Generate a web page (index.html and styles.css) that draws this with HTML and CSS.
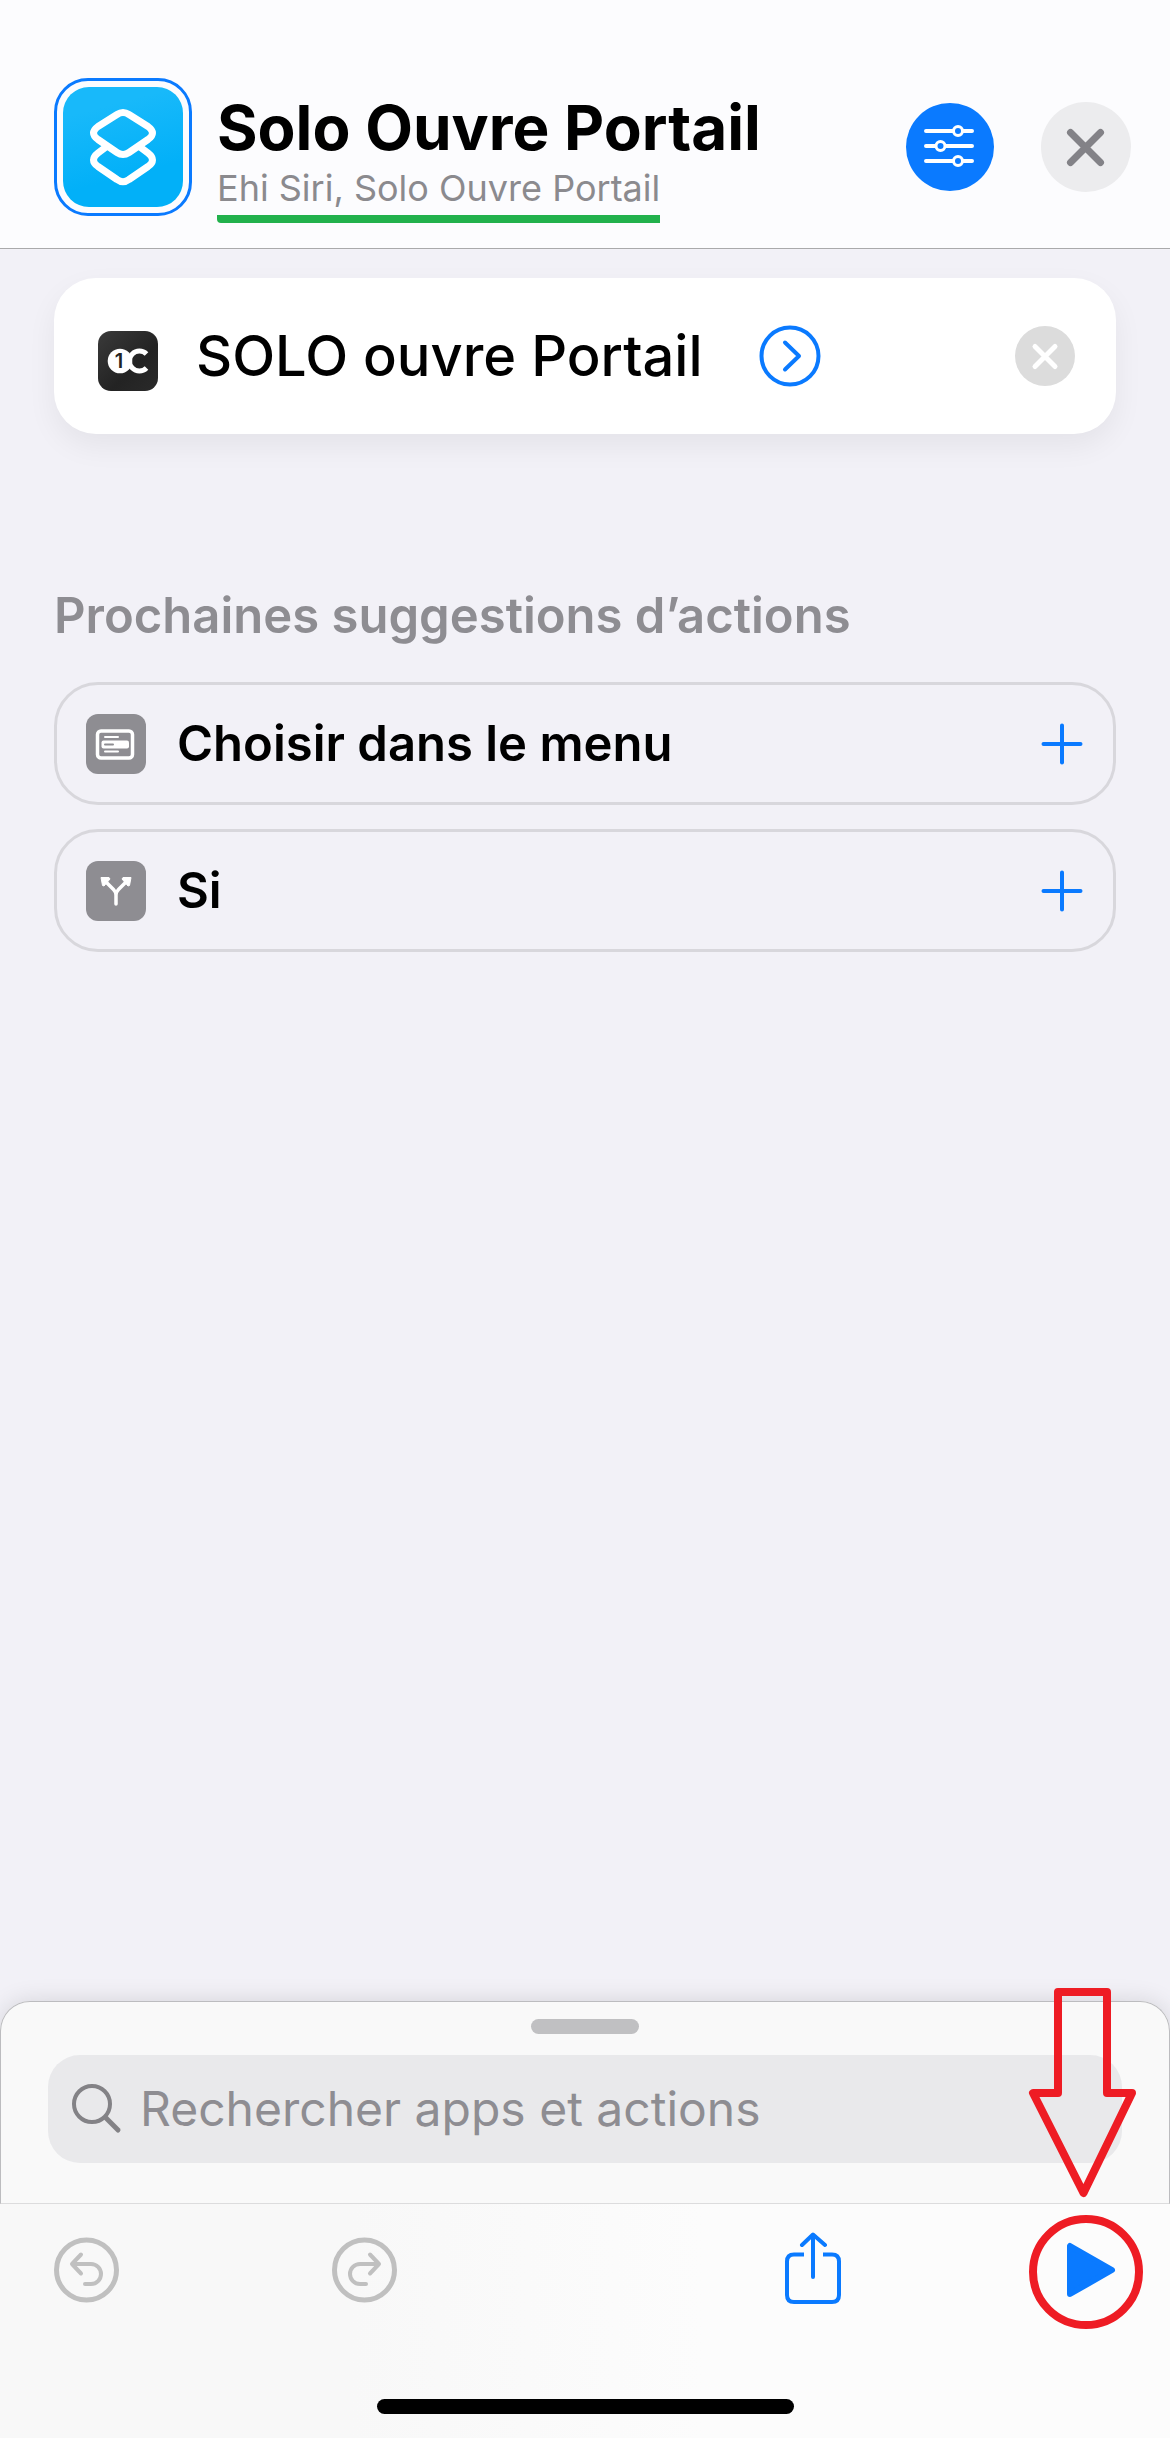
FILE: index.html
```html
<!DOCTYPE html>
<html lang="fr">
<head>
<meta charset="utf-8">
<meta name="viewport" content="width=device-width, initial-scale=1">
<title>Solo Ouvre Portail</title>
<link rel="stylesheet" href="styles.css">
</head>
<body>
<div class="screen">
  <header class="header">
    <button class="shortcut-icon" type="button" aria-label="Icône du raccourci">
      <svg class="shortcut-glyph" viewBox="0 0 120 120" fill="none" stroke="#fff" stroke-width="7" stroke-linejoin="round" aria-hidden="true">
        <path d="M54 27.5Q60 23.5 66 27.5L85 39.5Q94 46 85 52.5L66 65.5Q60 69.5 54 65.5L35 52.5Q26 46 35 39.5Z"/>
        <path d="M43 60L35 66Q26 73 35 79.5L54 92.5Q60 97 66 92.5L85 79.5Q94 73 85 66L77 60"/>
      </svg>
    </button>
    <div class="titles">
      <h1 class="title">Solo Ouvre Portail</h1>
      <p class="phrase">Ehi Siri, Solo Ouvre Portail</p>
    </div>
    <button class="round-button settings" type="button" aria-label="Réglages">
      <svg width="88" height="88" viewBox="0 0 88 88" fill="#0a7aff" stroke="#fff" stroke-width="4" stroke-linecap="round" aria-hidden="true">
        <path d="M20 28H66M20 43H66M20 58H66"/>
        <circle cx="52" cy="28" r="4.5" stroke-width="3"/><circle cx="34.500" cy="43" r="4.500" stroke-width="3"/><circle cx="52" cy="58" r="4.500" stroke-width="3"/>
      </svg>
    </button>
    <button class="round-button close" type="button" aria-label="Fermer">
      <svg width="90" height="90" viewBox="0 0 90 90" stroke="#838287" stroke-width="7" stroke-linecap="round" aria-hidden="true"><path d="M29.500 30.500L59.500 60.500M59.500 30.500L29.500 60.500"/></svg>
    </button>
  </header>

  <main class="content">
    <section class="action-card">
      <svg class="app-icon" width="60" height="60" viewBox="0 0 60 60" aria-hidden="true">
        <defs><linearGradient id="dark" x1="0" y1="0" x2="1" y2="1"><stop offset="0" stop-color="#3a3a3a"/><stop offset=".6" stop-color="#232323"/><stop offset="1" stop-color="#2a2a2a"/></linearGradient></defs>
        <rect width="60" height="60" rx="13" fill="url(#dark)"/>
        <circle cx="22" cy="30" r="12.300" fill="#fff"/>
        <path d="M48.500 23A10 10 0 1 0 48.500 37" fill="none" stroke="#fff" stroke-width="5"/>
        <text class="app-digit" x="21" y="37" text-anchor="middle">1</text>
      </svg>
      <span class="action-name">SOLO ouvre Portail</span>
      <button class="icon-button" type="button" aria-label="Afficher plus">
        <svg width="62" height="62" viewBox="0 0 62 62" fill="none" stroke="#0a7aff" stroke-width="4" stroke-linecap="round" stroke-linejoin="round" aria-hidden="true"><circle cx="31" cy="31" r="28.500"/><path d="M26 17.500L40 31L26 44.500"/></svg>
      </button>
      <button class="icon-button remove" type="button" aria-label="Supprimer l’action">
        <svg width="60" height="60" viewBox="0 0 60 60" stroke="#fff" stroke-width="5" stroke-linecap="round" aria-hidden="true"><circle cx="30" cy="30" r="30" fill="#dcdcdc" stroke="none"/><path d="M20 20.500L40 40.500M40 20.500L20 40.500"/></svg>
      </button>
    </section>

    <h2 class="section-title">Prochaines suggestions d’actions</h2>
    <div class="suggestions">
      <button class="suggestion" type="button">
        <svg width="60" height="60" viewBox="0 0 60 60" aria-hidden="true">
          <rect width="60" height="60" rx="12" fill="#8e8d92"/>
          <rect x="11.500" y="17" width="35" height="27" rx="3.500" fill="none" stroke="#fff" stroke-width="3.500"/>
          <rect x="15.500" y="26.500" width="27.500" height="8" rx="2" fill="#fff"/>
          <path d="M19 23H32M19 37.500H32" stroke="#fff" stroke-width="2" stroke-linecap="round"/>
          <path d="M19 30.500H27" stroke="#8e8d92" stroke-width="2" stroke-linecap="round"/>
        </svg>
        <span class="suggestion-name">Choisir dans le menu</span>
        <svg width="44" height="44" viewBox="0 0 44 44" stroke="#0a7aff" stroke-width="4" stroke-linecap="round" aria-hidden="true"><path d="M22 3.500V40.500M3.500 22H40.500"/></svg>
      </button>
      <button class="suggestion" type="button">
        <svg width="60" height="60" viewBox="0 0 60 60" aria-hidden="true">
          <rect width="60" height="60" rx="12" fill="#8e8d92"/>
          <path d="M30 43V34Q30 31 27.500 28.500L20 21M30 34Q30 31 32.500 28.500L40 21" fill="none" stroke="#fff" stroke-width="3.500" stroke-linecap="round"/>
          <path d="M15 16.500H23L24 18L18 25L16.500 24.500ZM45 16.500H37L36 18L42 25L43.500 24.500Z" fill="#fff" stroke="#fff" stroke-linejoin="round"/>
        </svg>
        <span class="suggestion-name">Si</span>
        <svg width="44" height="44" viewBox="0 0 44 44" stroke="#0a7aff" stroke-width="4" stroke-linecap="round" aria-hidden="true"><path d="M22 3.500V40.500M3.500 22H40.500"/></svg>
      </button>
    </div>
  </main>

  <footer class="dock">
    <div class="sheet">
      <div class="handle"></div>
      <label class="search">
        <svg width="52" height="52" viewBox="0 0 52 52" fill="none" stroke="#838286" stroke-linecap="round" aria-hidden="true"><circle cx="22" cy="21" r="18" stroke-width="4"/><path d="M36 35L48 47" stroke-width="5"/></svg>
        <input class="search-input" type="search" placeholder="Rechercher apps et actions" aria-label="Rechercher apps et actions">
      </label>
    </div>
    <nav class="toolbar" aria-label="Outils">
      <div class="tool-group">
        <button class="icon-button" type="button" aria-label="Annuler">
          <svg width="66" height="66" viewBox="0 0 66 66" fill="none" stroke="#c0c0c0" stroke-width="4" stroke-linecap="round" stroke-linejoin="round" aria-hidden="true"><circle cx="32.500" cy="33" r="30" stroke-width="5"/><path d="M27 17.500L18 27L27 36.500M18 27H37A10 10 0 0 1 37 47H31"/></svg>
        </button>
        <button class="icon-button" type="button" aria-label="Rétablir">
          <svg width="66" height="66" viewBox="0 0 66 66" fill="none" stroke="#c0c0c0" stroke-width="4" stroke-linecap="round" stroke-linejoin="round" aria-hidden="true"><circle cx="32.500" cy="33" r="30" stroke-width="5"/><path d="M38 17.500L47 27L38 36.500M47 27H28A10 10 0 0 0 28 47H34"/></svg>
        </button>
      </div>
      <div class="tool-group">
        <button class="icon-button" type="button" aria-label="Partager">
          <svg width="66" height="76" viewBox="0 2 66 76" fill="none" stroke="#0a7aff" stroke-width="4" aria-hidden="true"><path d="M24 24.500H14Q7 24.500 7 31.500V65Q7 72 14 72H52Q59 72 59 65V31.500Q59 24.500 52 24.500H43"/><path d="M33 47V5M22 15L33 4.500L45 15" stroke-linecap="round" stroke-linejoin="round"/></svg>
        </button>
        <button class="icon-button" type="button" aria-label="Exécuter">
          <svg width="66" height="66" viewBox="0 0 66 66" fill="#0a7aff" stroke="#0a7aff" stroke-width="6" stroke-linejoin="round" aria-hidden="true"><path d="M12 9V57L54 33Z"/></svg>
        </button>
      </div>
    </nav>
    <div class="home-indicator"></div>
    <svg class="callout" width="120" height="350" viewBox="0 0 120 350" fill="none" stroke="#ee1c24" stroke-width="8" stroke-linejoin="round" aria-hidden="true">
      <path d="M34 8H83V109H108L59.500 209L9 109H34Z"/>
      <circle cx="62" cy="288" r="53"/>
    </svg>
  </footer>
</div>
</body>
</html>
```
FILE: styles.css
```css
* {
  box-sizing: border-box;
}

body {
  margin: 0;
  background: #f2f1f7;
  color: #000;
  font-family: Inter, "Liberation Sans", sans-serif;
}

button {
  padding: 0;
  border: 0;
  background: none;
  color: inherit;
  font: inherit;
  text-align: left;
}

svg {
  display: block;
  flex: none;
}

.screen {
  display: flex;
  flex-direction: column;
  min-height: 100vh;
}

/* Header */

.header {
  display: flex;
  align-items: center;
  padding: 71px 39px 25px 54px;
  border-bottom: 1px solid #a9a9ab;
  background: #fcfcfe;
}

.shortcut-icon {
  flex: none;
  padding: 6px;
  border: 3px solid #0a7aff;
  border-radius: 34px;
}

.shortcut-glyph {
  width: 120px;
  height: 120px;
  border-radius: 26px;
  background: linear-gradient(165deg, #18b9fa 20%, #02b0f8 70%);
}

.titles {
  flex: 1;
  margin-left: 25px;
  padding-top: 21px;
}

.title {
  margin: 0;
  font-size: 62px;
  font-weight: 700;
  line-height: 72px;
}

.phrase {
  width: fit-content;
  margin: 0;
  padding-bottom: 3px;
  border-bottom: 8px solid #22b14c;
  border-radius: 4px 0 0 4px;
  color: #8b8a8e;
  font-size: 36px;
  line-height: 48px;
}

.round-button {
  flex: none;
  border-radius: 50%;
}

.settings {
  margin-right: 47px;
  background: #0a7aff;
}

.close {
  background: #ececee;
}

/* Actions */

.content {
  flex: 1;
  padding: 29px 54px;
}

.action-card {
  display: flex;
  align-items: center;
  height: 156px;
  padding: 0 41px 0 44px;
  border-radius: 42px;
  background: #fff;
  box-shadow: 0 12px 30px rgba(0, 0, 20, 0.06);
}

.app-icon {
  margin-top: 10px;
}

.app-digit {
  fill: #232323;
  font-size: 20px;
  font-weight: 600;
}

.action-name {
  margin: 0 56px 0 38px;
  font-size: 56px;
  font-weight: 500;
  line-height: 72px;
}

.remove {
  margin-left: auto;
}

.section-title {
  margin: 152px 0 36px;
  color: #8e8d92;
  font-size: 49px;
  font-weight: 600;
  line-height: 60px;
}

.suggestions {
  display: grid;
  gap: 24px;
}

.suggestion {
  display: flex;
  align-items: center;
  gap: 31px;
  height: 123px;
  padding: 0 29px;
  border: 3px solid #d8d7dc;
  border-radius: 44px;
}

.suggestion-name {
  flex: 1;
  font-size: 49px;
  font-weight: 600;
  line-height: 60px;
}

/* Bottom sheet and toolbar */

.dock {
  position: relative;
  background: linear-gradient(90deg, #f8f8f8 30%, #fcfcfc 60%);
  border-radius: 30px 30px 0 0;
  box-shadow: 0 0 24px rgba(0, 0, 20, 0.12);
}

.sheet {
  padding: 17px 47px 40px;
  border: 1px solid #bcbcbf;
  border-bottom-color: #dcdcdd;
  border-radius: 30px 30px 0 0;
  background: #f9f9f9;
}

.handle {
  width: 108px;
  height: 15px;
  margin: 0 auto 21px;
  border-radius: 8px;
  background: #c0c0c2;
}

.search {
  display: flex;
  align-items: center;
  gap: 18px;
  height: 108px;
  padding: 0 24px 0 22px;
  border-radius: 32px;
  background: #e9e9eb;
}

.search-input {
  flex: 1;
  min-width: 0;
  padding: 0;
  border: 0;
  outline: 0;
  background: none;
  font: inherit;
  font-size: 48px;
  line-height: 60px;
}

.search-input::placeholder {
  color: #8e8d92;
  opacity: 1;
}

.toolbar {
  display: flex;
  justify-content: space-between;
  padding: 28px 46px 0 54px;
}

.tool-group {
  display: flex;
  align-items: center;
  gap: 212px;
}

.home-indicator {
  width: 417px;
  height: 15px;
  margin: 91px auto 24px;
  border-radius: 8px;
  background: #000;
}

/* Red arrow and ring pointing out the run button */

.callout {
  position: absolute;
  top: -17px;
  right: 26px;
  pointer-events: none;
}
```
